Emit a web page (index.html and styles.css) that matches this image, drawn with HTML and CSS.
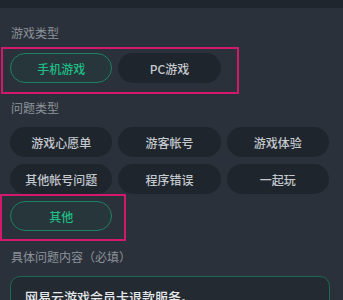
FILE: index.html
```html
<!DOCTYPE html>
<html lang="zh">
<head>
<meta charset="utf-8">
<link rel="stylesheet" href="styles.css">
</head>
<body>
<div class="page">
  <div class="topbar"></div>
  <div class="content">
    <div class="label label-first">游戏类型</div>
    <div class="pills">
      <div class="pill selected">手机游戏</div>
      <div class="pill">PC游戏</div>
    </div>
    <div class="label">问题类型</div>
    <div class="pills pills-grid">
      <div class="pill">游戏心愿单</div>
      <div class="pill">游客帐号</div>
      <div class="pill">游戏体验</div>
      <div class="pill">其他帐号问题</div>
      <div class="pill">程序错误</div>
      <div class="pill">一起玩</div>
      <div class="pill selected">其他</div>
    </div>
    <div class="label label-third">具体问题内容（必填）</div>
    <div class="textbox">网易云游戏会员卡退款服务。</div>
  </div>
  <div class="mark mark-one"></div>
  <div class="mark mark-two"></div>
</div>
</body>
</html>
```
FILE: styles.css
```css
html, body {
  margin: 0;
  padding: 0;
  background: #2b313a;
}
.page {
  position: relative;
  width: 343px;
  height: 300px;
  overflow: hidden;
  font-family: "Noto Sans CJK SC", "Noto Sans", sans-serif;
}
.topbar {
  height: 8px;
  background: #20262d;
}
.content {
  padding: 0 14px 0 10px;
}
.label {
  font-size: 12px;
  line-height: 16px;
  color: #8c939b;
  margin: 17px 0 12px 1px;
}
.label-first {
  margin-top: 17px;
}
.label + .pills-grid {
  margin-top: -1px;
}
.label-third {
  margin-top: 18px;
  margin-bottom: 11px;
}
.pills {
  display: grid;
  grid-template-columns: repeat(3, 1fr);
  gap: 7px 6px;
}
.pill {
  height: 30px;
  border-radius: 15px;
  background: #1f252c;
  color: #c3c8ce;
  font-size: 12px;
  font-weight: 500;
  display: flex;
  align-items: center;
  justify-content: center;
  box-sizing: border-box;
}
.pill.selected {
  background: #27363a;
  border: 1.5px solid #1d8262;
  color: #21bd86;
}
.textbox {
  margin-right: -1px;
  height: 60px;
  box-sizing: border-box;
  border: 1.5px solid #1d6a52;
  border-radius: 10px;
  background: #242a31;
  color: #e6e9ec;
  font-size: 13px;
  font-weight: 500;
  padding: 11px 14px;
  line-height: 18px;
}
.mark {
  position: absolute;
  border: 2px solid #d3196c;
  box-sizing: border-box;
}
.mark-one {
  left: 1px;
  top: 47px;
  width: 238px;
  height: 47px;
}
.mark-two {
  left: 0;
  top: 194px;
  width: 126px;
  height: 47px;
}
```
